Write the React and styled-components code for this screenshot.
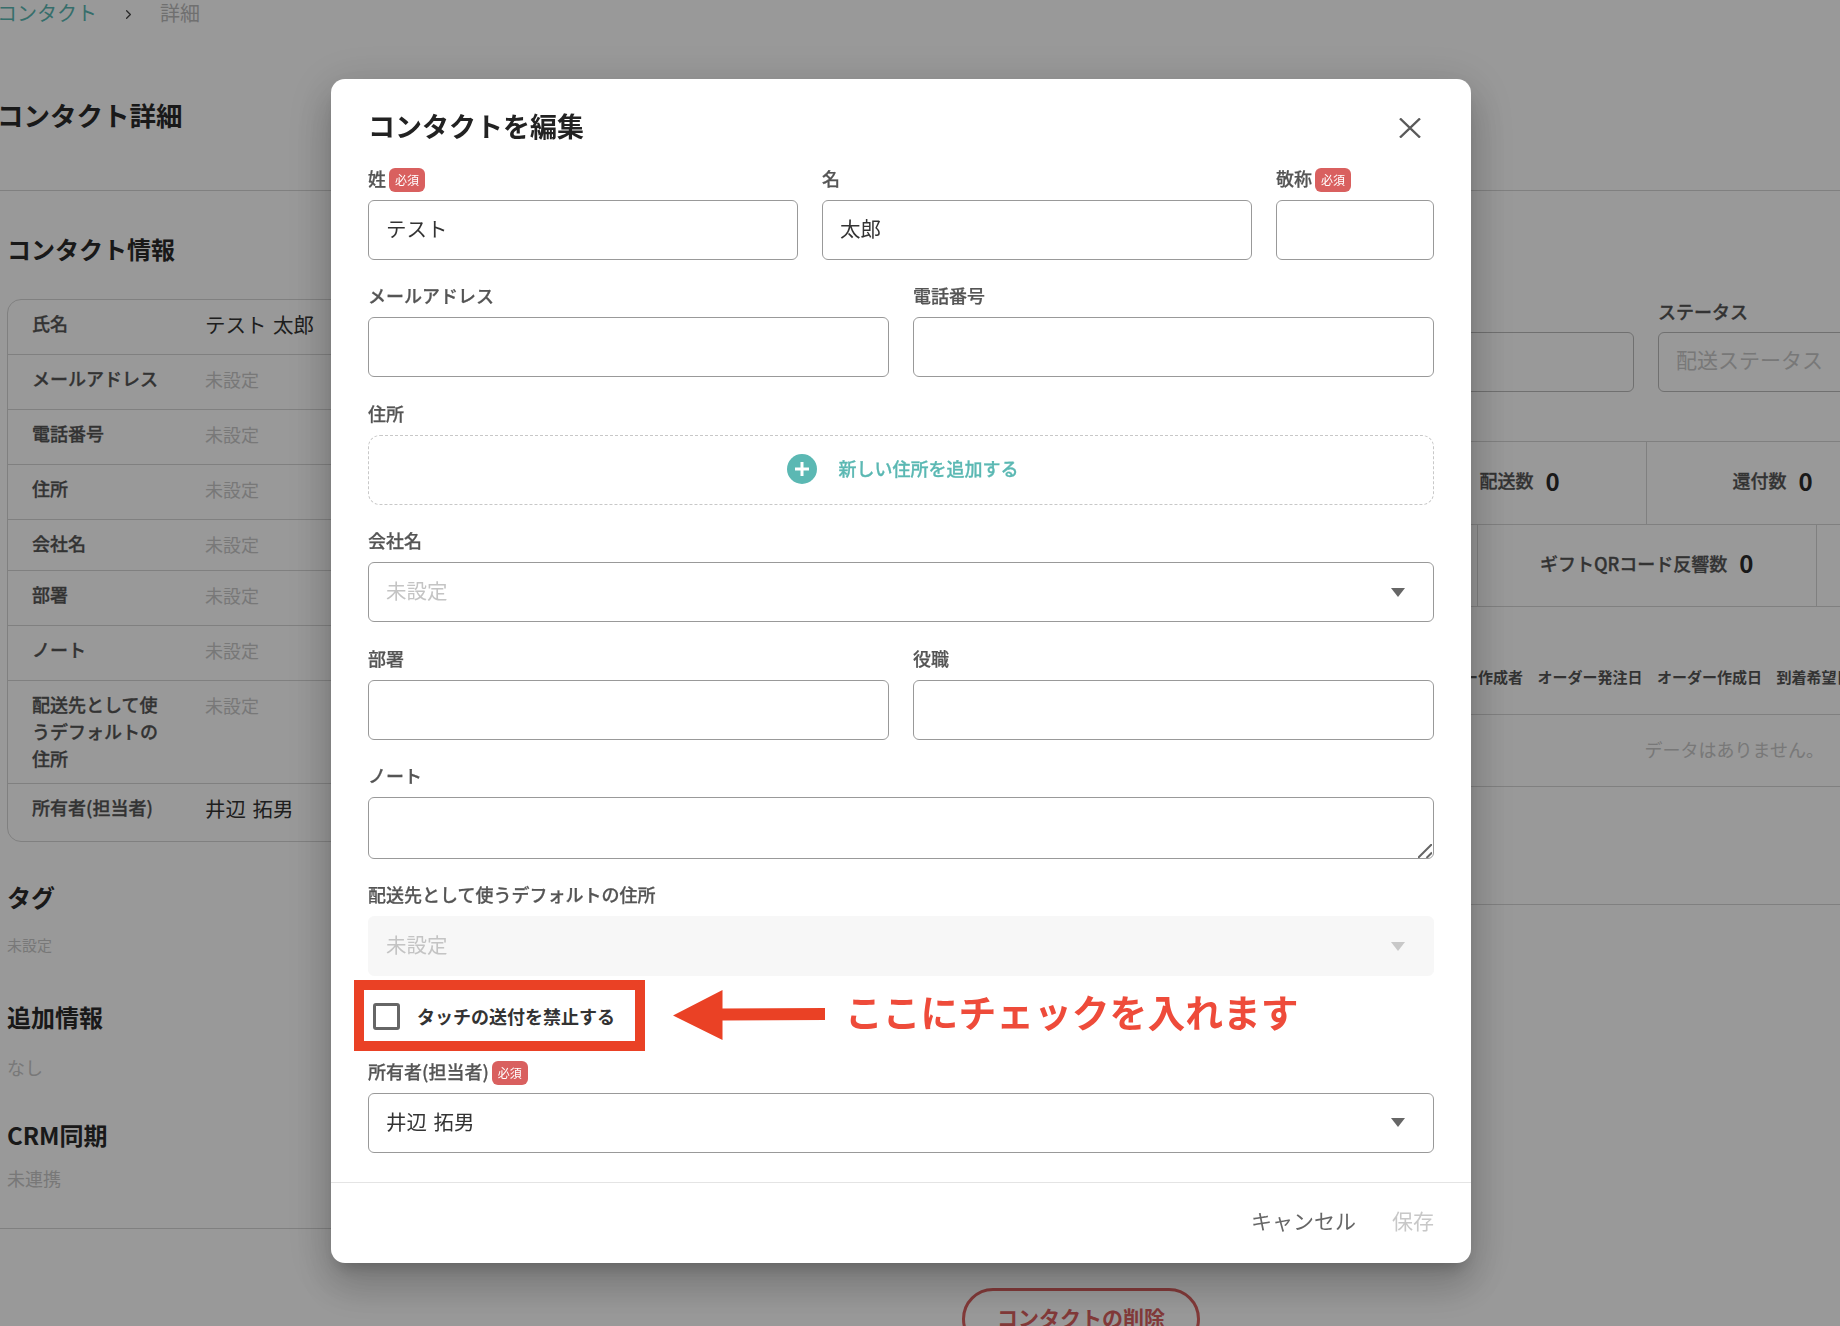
import React from "react";
import styled, { createGlobalStyle } from "styled-components";
import { ChevronRight } from "lucide-react";

const GlobalStyle = createGlobalStyle`
html, body {
    margin: 0;
    padding: 0;
    width: 1840px;
    height: 1326px;
    overflow: hidden;
    background: #fff;
}
* {
    box-sizing: border-box;
}
body, input, textarea, button {
    font-family: "Noto Sans CJK JP", "Noto Sans", sans-serif;
}
`

/* ---- page behind the dialog ---- */
const Page = styled.div`
width: 1840px;
height: 1326px;
overflow: hidden;
background: #fff;
color: #333;
`
const PageHeader = styled.header`
height: 191px;
border-bottom: 1px solid #d6d6d6;
padding-left: 0;
`
const Crumbs = styled.nav`
display: flex;
align-items: center;
height: 26px;
margin-left: -3px;
font-size: 20px;
line-height: 26px;
`
const CrumbLink = styled.a`
color: #5bb8b3;
`
const CrumbSep = styled.span`
display: flex;
margin: 2px 24px 0 24px;
color: #444;
`
const CrumbNow = styled.span`
color: #bbb;
`
const PageTitle = styled.h1`
margin: 70.5px 0 0 -3px;
font-size: 26.5px;
line-height: 36px;
font-weight: 700;
color: #2b2b2b;
`
const Body = styled.div`
display: grid;
grid-template-columns: 381.5px 1fr;
`
const LeftCol = styled.aside`
padding: 40.5px 0 36.5px 7px;
border-bottom: 1px solid #d6d6d6;
`
const SectionTitle = styled.h2`
margin: ${props => props.$top || 0}px 0 0;
font-size: 24px;
line-height: 34px;
font-weight: 700;
color: #2b2b2b;
`
const InfoTable = styled.div`
margin-top: 33.5px;
border: 1px solid #d6d6d6;
border-radius: 14px;
overflow: hidden;
`
const InfoRow = styled.div`
display: grid;
grid-template-columns: 173px 1fr;
border-bottom: ${props => props.$last ? 'none' : '1px solid #d6d6d6'};
`
const InfoLabel = styled.div`
padding: 10px 20px ${props => props.$pad || 17}px 24px;
font-size: 18px;
line-height: 27px;
font-weight: 500;
-webkit-text-stroke: 0.3px #555;
color: #555;
`
const InfoValue = styled.div`
padding: 11px 0 0 24px;
font-size: ${props => props.$empty ? 18 : 20.5}px;
line-height: 27px;
word-spacing: 2px;
color: ${props => props.$empty ? '#c9c9c9' : '#333'};
white-space: nowrap;
`
const MutedText = styled.p`
margin: ${props => props.$top || 0}px 0 0;
font-size: ${props => props.$size || 18}px;
line-height: ${props => props.$line || 26}px;
color: #c9c9c9;
`
const RightCol = styled.main`
min-width: 0;
`
const Filters = styled.div`
display: flex;
gap: 24px;
padding-top: 109px;
`
const FilterField = styled.div`
flex: none;
width: ${props => props.$width}px;
`
const FilterLabel = styled.div`
height: 24px;
margin-bottom: 8px;
font-size: 18px;
line-height: 22px;
font-weight: 500;
-webkit-text-stroke: 0.3px #555;
color: #555;
`
const FilterBox = styled.div`
height: 60px;
padding-left: 17px;
border: 1px solid #bbb;
border-radius: 6px;
font-size: 21px;
line-height: 52px;
color: #c9c9c9;
white-space: nowrap;
`
const StatRow = styled.div`
display: flex;
height: ${props => props.$height}px;
margin-top: ${props => props.$top || 0}px;
padding-left: ${props => props.$indent || 0}px;
border-bottom: 1px solid #d6d6d6;
border-top: ${props => props.$first ? '1px solid #d6d6d6' : 'none'};
`
const StatCell = styled.div`
flex: none;
width: ${props => props.$width}px;
display: flex;
align-items: center;
justify-content: center;
gap: 12px;
padding-bottom: 6px;
border-right: 1px solid #d6d6d6;
font-size: 18px;
font-weight: 500;
color: #555;
`
const StatName = styled.span`
-webkit-text-stroke: 0.3px #555;
`
const StatValue = styled.span`
font-size: 24px;
font-weight: 700;
color: #2b2b2b;
`
const TableHead = styled.div`
display: flex;
gap: 14.5px;
height: 108px;
padding: 59px 0 0 1036.5px;
border-bottom: 1px solid #d6d6d6;
font-size: 15px;
line-height: 22px;
font-weight: 700;
color: #555;
white-space: nowrap;
`
const TableEmpty = styled.div`
height: 72px;
padding: 21px 16px 0 0;
border-bottom: 1px solid #d6d6d6;
text-align: right;
font-size: 18px;
line-height: 26px;
color: #c9c9c9;
`
const TableRest = styled.div`
height: 118px;
border-bottom: 1px solid #d6d6d6;
`
const PageFooter = styled.div`
display: flex;
justify-content: center;
margin-top: 59.2px;
padding-left: 322px;
`
const DeleteButton = styled.button`
width: 238px;
height: 62px;
padding: 0 0 4px;
border: 3px solid #d9605f;
border-radius: 31px;
background: #fff;
font-size: 21px;
font-weight: 700;
color: #d9605f;
`

/* ---- dialog ---- */
const Backdrop = styled.div`
position: fixed;
inset: 0;
padding: 79px 0 0 331px;
background: rgba(0, 0, 0, 0.4);
`
const Modal = styled.section`
width: 1140px;
height: 1184px;
background: #fff;
border-radius: 14px;
box-shadow: 0 11px 15px -7px rgba(0, 0, 0, 0.2), 0 24px 38px 3px rgba(0, 0, 0, 0.14), 0 9px 46px 8px rgba(0, 0, 0, 0.12);
`
const ModalHeader = styled.div`
display: flex;
justify-content: space-between;
align-items: flex-start;
height: 89px;
padding: 30px 50px 0 37px;
`
const ModalTitle = styled.h2`
margin: 0;
font-size: 27px;
line-height: 34px;
font-weight: 700;
color: #222;
`
const CloseButton = styled.button`
display: flex;
padding: 9px 0 0;
border: none;
background: none;
color: #5a5a5a;
`
const Form = styled.form`
display: flex;
flex-direction: column;
gap: 25.4px;
padding: 0 37px;
`
const Columns = styled.div`
display: grid;
grid-template-columns: ${props => props.$cols};
gap: 24px;
`
const Field = styled.div`
position: relative;
min-width: 0;
`
const Label = styled.label`
display: flex;
align-items: flex-start;
height: 24px;
margin-bottom: 8px;
font-size: 18px;
line-height: 21px;
font-weight: 500;
-webkit-text-stroke: 0.25px #555;
color: #555;
`
const Required = styled.span`
width: 36px;
height: 24px;
margin-left: 3px;
border-radius: 6px;
background: #d9605f;
color: #fff;
font-size: 12px;
font-weight: 400;
line-height: 23px;
text-align: center;
-webkit-text-stroke: 0;
`
const TextInput = styled.input`
display: block;
width: 100%;
height: 60px;
padding: 0 17px 5px;
border: 1px solid #999;
border-radius: 6px;
outline: none;
background: #fff;
font-size: 20.5px;
color: #333;
`
const NoteArea = styled.textarea`
display: block;
width: 100%;
height: 62px;
padding: 12px 17px;
border: 1px solid #999;
border-radius: 6px;
outline: none;
resize: none;
background: #fff;
font-size: 20px;
color: #333;
`
const NoteGrip = styled.svg`
position: absolute;
right: 2px;
bottom: 1px;
`
const AddressButton = styled.button`
display: flex;
justify-content: center;
align-items: center;
gap: 22px;
width: 100%;
height: 70px;
padding: 0 0 1px 3px;
border: 1px dashed #c8c8c8;
border-radius: 12px;
background: #fff;
font-size: 18px;
font-weight: 500;
color: #5bb8b3;
`
const AddressText = styled.span`
margin-bottom: 2px;
-webkit-text-stroke: 0.3px #5bb8b3;
`
const Select = styled.div`
display: flex;
justify-content: space-between;
align-items: center;
height: 60px;
padding: 0 28px 0 17px;
border: 1px solid ${props => props.$disabled ? '#f7f7f7' : '#999'};
border-radius: 6px;
background: ${props => props.$disabled ? '#f7f7f7' : '#fff'};
font-size: 20.5px;
word-spacing: 2px;
color: ${props => props.$muted ? '#c4c4c4' : '#333'};
`
const SelectText = styled.span`
margin-bottom: 4px;
`
const CheckRow = styled.div`
display: flex;
align-items: center;
height: 50px;
margin: -11.4px 0 -4.8px -14px;
`
const Highlight = styled.div`
flex: none;
display: flex;
align-items: center;
gap: 17px;
width: 291px;
height: 71px;
padding: 2px 0 0 9px;
border: 10px solid #ea4125;
background: #fff;
`
const CheckBox = styled.span`
flex: none;
width: 27px;
height: 27px;
border: 3px solid #666;
border-radius: 3px;
background: #fff;
`
const CheckText = styled.span`
font-size: 18px;
font-weight: 700;
color: #333;
white-space: nowrap;
`
const ArrowMark = styled.svg`
flex: none;
margin: 0 0 0 27.5px;
`
const Annotation = styled.span`
margin: -9px 0 0 20.5px;
font-size: 37.8px;
font-weight: 700;
line-height: 50px;
color: #ee4b3a;
white-space: nowrap;
`
const ModalFooter = styled.div`
display: flex;
justify-content: flex-end;
gap: 36px;
height: 82px;
margin-top: 29px;
padding: 19px 37px 0 0;
border-top: 1px solid #e4e4e4;
`
const FooterButton = styled.button`
height: 36px;
padding: 0;
border: none;
background: none;
font-size: 21px;
line-height: 36px;
color: ${props => props.$disabled ? '#c8c8c8' : '#666'};
`

const PlusIcon = () => (
    <svg width="30" height="30" viewBox="0 0 30 30">
        <circle cx="15" cy="15" r="15" fill="#5bb8b3" />
        <path d="M15 8v14M8 15h14" stroke="#fff" strokeWidth="3" />
    </svg>
)

const CaretIcon = ({ muted }) => (
    <svg width="14" height="9" viewBox="0 0 14 9">
        <path d="M0 0h14L7 9z" fill={muted ? '#c8c8c8' : '#666'} />
    </svg>
)

const infoRows = [
    { label: '氏名', value: 'テスト 太郎' },
    { label: 'メールアドレス' },
    { label: '電話番号' },
    { label: '住所' },
    { label: '会社名', pad: 12.7 },
    { label: '部署' },
    { label: 'ノート' },
    { label: '配送先として使うデフォルトの住所', pad: 11.7 },
    { label: '所有者(担当者)', value: '井辺 拓男', pad: 19.7, last: true },
]

const App = () => {
    return (
        <>
            <GlobalStyle />
            <Page>
                <PageHeader>
                    <Crumbs>
                        <CrumbLink>コンタクト</CrumbLink>
                        <CrumbSep><ChevronRight size={15} /></CrumbSep>
                        <CrumbNow>詳細</CrumbNow>
                    </Crumbs>
                    <PageTitle>コンタクト詳細</PageTitle>
                </PageHeader>
                <Body>
                    <LeftCol>
                        <SectionTitle>コンタクト情報</SectionTitle>
                        <InfoTable>
                            {infoRows.map(row => (
                                <InfoRow key={row.label} $last={row.last}>
                                    <InfoLabel $pad={row.pad}>{row.label}</InfoLabel>
                                    <InfoValue $empty={!row.value}>{row.value || '未設定'}</InfoValue>
                                </InfoRow>
                            ))}
                        </InfoTable>
                        <SectionTitle $top={37.5}>タグ</SectionTitle>
                        <MutedText $top={20} $size={15} $line={22}>未設定</MutedText>
                        <SectionTitle $top={44}>追加情報</SectionTitle>
                        <MutedText $top={20.5}>なし</MutedText>
                        <SectionTitle $top={37.5}>CRM同期</SectionTitle>
                        <MutedText $top={13.5}>未連携</MutedText>
                    </LeftCol>
                    <RightCol>
                        <Filters>
                            <FilterField $width={1252.5}>
                                <FilterLabel>&nbsp;</FilterLabel>
                                <FilterBox />
                            </FilterField>
                            <FilterField $width={300}>
                                <FilterLabel>ステータス</FilterLabel>
                                <FilterBox>配送ステータス</FilterBox>
                            </FilterField>
                        </Filters>
                        <StatRow $first $top={49} $height={84}>
                            <StatCell $width={253} />
                            <StatCell $width={253} />
                            <StatCell $width={253} />
                            <StatCell $width={253} />
                            <StatCell $width={253}><StatName>配送数</StatName> <StatValue>0</StatValue></StatCell>
                            <StatCell $width={253}><StatName>還付数</StatName> <StatValue>0</StatValue></StatCell>
                        </StatRow>
                        <StatRow $height={82} $indent={756.5}>
                            <StatCell $width={339.5} />
                            <StatCell $width={339.5}><StatName>ギフトQRコード反響数</StatName> <StatValue>0</StatValue></StatCell>
                            <StatCell $width={339.5} />
                        </StatRow>
                        <TableHead>
                            <span>オーダー作成者</span>
                            <span>オーダー発注日</span>
                            <span>オーダー作成日</span>
                            <span>到着希望日</span>
                        </TableHead>
                        <TableEmpty>データはありません。</TableEmpty>
                        <TableRest />
                    </RightCol>
                </Body>
                <PageFooter>
                    <DeleteButton>コンタクトの削除</DeleteButton>
                </PageFooter>
            </Page>

            <Backdrop>
                <Modal>
                    <ModalHeader>
                        <ModalTitle>コンタクトを編集</ModalTitle>
                        <CloseButton type="button">
                            <svg width="22" height="20" viewBox="0 0 22 20">
                                <path d="M1 0.5L21 19.5M21 0.5L1 19.5" stroke="currentColor" strokeWidth="2.4" fill="none" />
                            </svg>
                        </CloseButton>
                    </ModalHeader>
                    <Form>
                        <Columns $cols="430px 430px 1fr">
                            <Field>
                                <Label>姓<Required>必須</Required></Label>
                                <TextInput defaultValue="テスト" />
                            </Field>
                            <Field>
                                <Label>名</Label>
                                <TextInput defaultValue="太郎" />
                            </Field>
                            <Field>
                                <Label>敬称<Required>必須</Required></Label>
                                <TextInput />
                            </Field>
                        </Columns>
                        <Columns $cols="1fr 1fr">
                            <Field>
                                <Label>メールアドレス</Label>
                                <TextInput />
                            </Field>
                            <Field>
                                <Label>電話番号</Label>
                                <TextInput />
                            </Field>
                        </Columns>
                        <Field>
                            <Label>住所</Label>
                            <AddressButton type="button">
                                <PlusIcon />
                                <AddressText>新しい住所を追加する</AddressText>
                            </AddressButton>
                        </Field>
                        <Field>
                            <Label>会社名</Label>
                            <Select $muted><SelectText>未設定</SelectText><CaretIcon /></Select>
                        </Field>
                        <Columns $cols="1fr 1fr">
                            <Field>
                                <Label>部署</Label>
                                <TextInput />
                            </Field>
                            <Field>
                                <Label>役職</Label>
                                <TextInput />
                            </Field>
                        </Columns>
                        <Field>
                            <Label>ノート</Label>
                            <NoteArea />
                            <NoteGrip width="14" height="14" viewBox="0 0 14 14">
                                <path d="M0 14L14 0M8.5 14L14 8.5" stroke="#666" strokeWidth="2" fill="none" />
                            </NoteGrip>
                        </Field>
                        <Field>
                            <Label>配送先として使うデフォルトの住所</Label>
                            <Select $muted $disabled><SelectText>未設定</SelectText><CaretIcon muted /></Select>
                        </Field>
                        <CheckRow>
                            <Highlight>
                                <CheckBox />
                                <CheckText>タッチの送付を禁止する</CheckText>
                            </Highlight>
                            <ArrowMark width="152" height="50" viewBox="0 0 152 50">
                                <path d="M0 25.5L49.5 0V18.5L152 18V30L49.5 30.5V50z" fill="#ea4125" />
                            </ArrowMark>
                            <Annotation>ここにチェックを入れます</Annotation>
                        </CheckRow>
                        <Field>
                            <Label>所有者(担当者)<Required>必須</Required></Label>
                            <Select><SelectText>井辺 拓男</SelectText><CaretIcon /></Select>
                        </Field>
                    </Form>
                    <ModalFooter>
                        <FooterButton type="button">キャンセル</FooterButton>
                        <FooterButton type="button" $disabled>保存</FooterButton>
                    </ModalFooter>
                </Modal>
            </Backdrop>
        </>
    )
}

export default App;
